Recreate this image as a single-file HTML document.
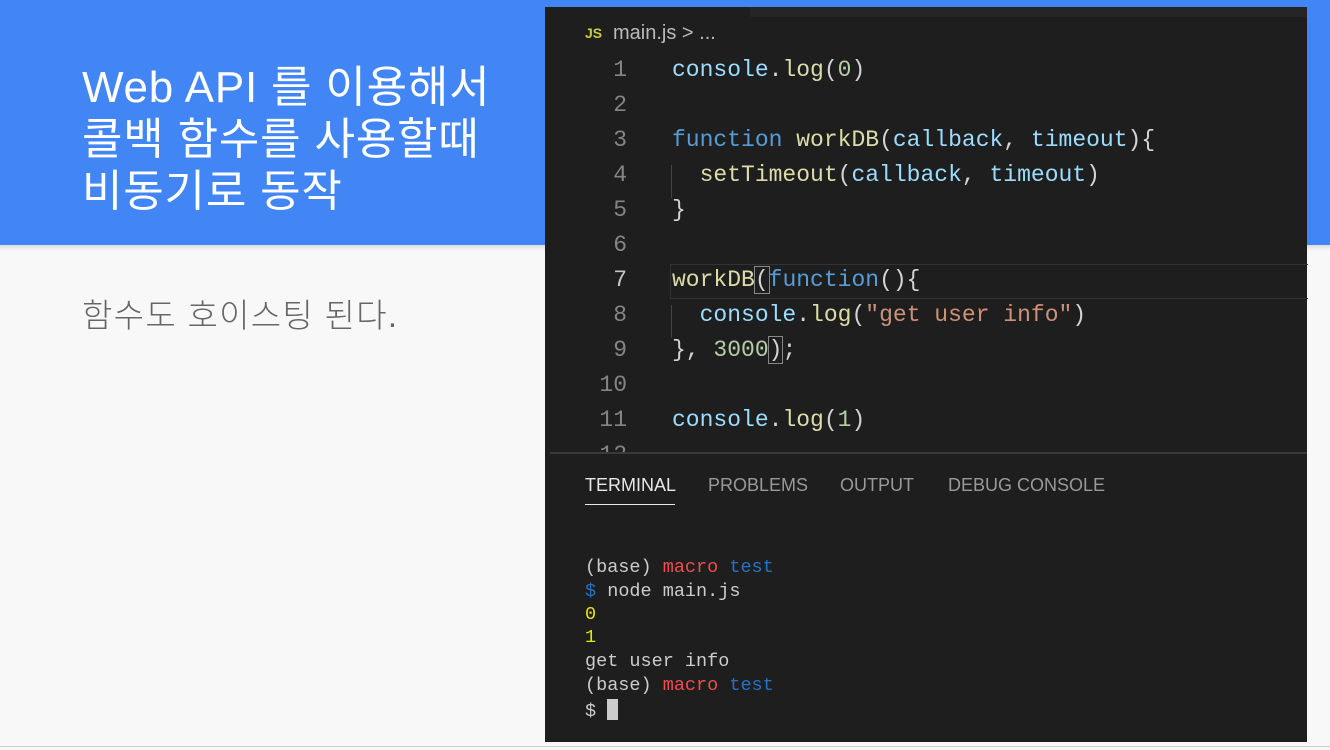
<!DOCTYPE html>
<html><head><meta charset="utf-8"><style>
body{margin:0;width:1330px;height:750px;background:#f8f8f8;position:relative;overflow:hidden;font-family:"Liberation Sans","Noto Sans CJK KR",sans-serif}
.hdr{position:absolute;left:0;top:0;width:1330px;height:245px;background:#4285f4}
.sh{position:absolute;left:0;top:245px;width:1330px;height:6px;background:linear-gradient(#ddd,#f8f8f8)}
.title{position:absolute;left:82px;top:62px;color:#fff;font-size:44px;line-height:52px;letter-spacing:0.8px}
.sub{position:absolute;left:82px;top:296px;color:#666;font-size:33px;line-height:40px;letter-spacing:1.3px;font-weight:300}
.ed{position:absolute;left:545px;top:7px;width:762px;height:735px;background:#1e1e1e}
.code{position:absolute;font-family:"Liberation Mono",monospace;font-size:23px;white-space:pre}
.ln{position:absolute;left:0;width:82px;text-align:right;color:#858585}
.l{position:absolute;left:127px}
.b{color:#9cdcfe}.y{color:#dcdcaa}.k{color:#569cd6}.n{color:#b5cea8}.s{color:#ce9178}.w{color:#d4d4d4}
.t{position:absolute;font-family:"Liberation Mono",monospace;font-size:18.5px;white-space:pre;color:#ccc;left:40px}
.r{color:#f14c4c}.bl{color:#2472c8}.yl{color:#e5e510}
.tab{position:absolute;top:468px;color:#999;font-size:18px}
</style></head><body>
<div class="hdr"></div><div class="sh"></div>
<div class="title">Web API 를 이용해서<br>콜백 함수를 사용할때<br>비동기로 동작</div>
<div class="sub">함수도 호이스팅 된다.</div>
<div class="ed">
<div style="position:absolute;left:205px;top:0;width:557px;height:10px;background:#252526"></div>
<div style="position:absolute;left:40px;top:18px;font-size:14px;color:#cbcb41;font-weight:bold">JS</div>
<div style="position:absolute;left:68px;top:15px;font-size:20px;color:#bbb">main.js &gt; ...</div>
<div style="position:absolute;left:125px;top:257px;width:637px;height:33px;border:1px solid #333;border-right:none"></div>
<div style="position:absolute;left:126px;top:158px;width:1px;height:33px;background:#444"></div>
<div style="position:absolute;left:126px;top:298px;width:1px;height:33px;background:#444"></div>
<div class="code" style="left:0;top:0;width:762px;height:445px;overflow:hidden">
<div class="ln" style="top:50px">1</div><div class="l" style="top:50px"><span class="b">console</span><span class="w">.</span><span class="y">log</span><span class="w">(</span><span class="n">0</span><span class="w">)</span></div>
<div class="ln" style="top:85px">2</div>
<div class="ln" style="top:120px">3</div><div class="l" style="top:120px"><span class="k">function</span> <span class="y">workDB</span><span class="w">(</span><span class="b">callback</span><span class="w">, </span><span class="b">timeout</span><span class="w">){</span></div>
<div class="ln" style="top:155px">4</div><div class="l" style="top:155px">  <span class="y">setTimeout</span><span class="w">(</span><span class="b">callback</span><span class="w">, </span><span class="b">timeout</span><span class="w">)</span></div>
<div class="ln" style="top:190px">5</div><div class="l w" style="top:190px">}</div>
<div class="ln" style="top:225px">6</div>
<div class="ln" style="top:260px;color:#c6c6c6">7</div><div class="l" style="top:260px"><span class="y">workDB</span><span class="w" style="outline:1px solid #888">(</span><span class="k">function</span><span class="w">(){</span></div>
<div class="ln" style="top:295px">8</div><div class="l" style="top:295px">  <span class="b">console</span><span class="w">.</span><span class="y">log</span><span class="w">(</span><span class="s">"get user info"</span><span class="w">)</span></div>
<div class="ln" style="top:330px">9</div><div class="l" style="top:330px"><span class="w">}, </span><span class="n">3000</span><span class="w" style="outline:1px solid #888">)</span><span class="w">;</span></div>
<div class="ln" style="top:365px">10</div>
<div class="ln" style="top:400px">11</div><div class="l" style="top:400px"><span class="b">console</span><span class="w">.</span><span class="y">log</span><span class="w">(</span><span class="n">1</span><span class="w">)</span></div>
<div class="ln" style="top:435px">12</div>
</div>
<div style="position:absolute;left:5px;top:445px;width:757px;height:2px;background:#3a3a3a"></div>
<div class="tab" style="left:40px;color:#e7e7e7">TERMINAL</div>
<div style="position:absolute;left:40px;top:497px;width:90px;height:1px;background:#e7e7e7"></div>
<div class="tab" style="left:163px">PROBLEMS</div>
<div class="tab" style="left:295px">OUTPUT</div>
<div class="tab" style="left:403px">DEBUG CONSOLE</div>
<div class="t" style="top:550px">(base) <span class="r">macro</span> <span class="bl">test</span></div>
<div class="t" style="top:574px"><span class="bl">$</span> node main.js</div>
<div class="t yl" style="top:597px">0</div>
<div class="t yl" style="top:620px">1</div>
<div class="t" style="top:644px">get user info</div>
<div class="t" style="top:668px">(base) <span class="r">macro</span> <span class="bl">test</span></div>
<div class="t" style="top:692px">$ <span style="display:inline-block;width:11px;height:21px;background:#ccc;vertical-align:-4px"></span></div>
</div>
<div style="position:absolute;left:0;top:746px;width:1330px;height:1px;background:#ccc"></div>
</body></html>
